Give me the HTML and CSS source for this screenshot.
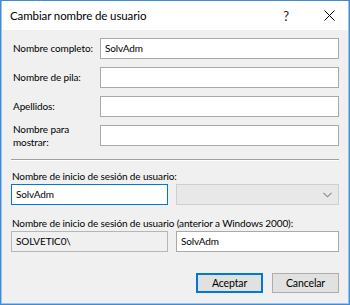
FILE: index.html
```html
<!DOCTYPE html>
<html lang="es">
<head>
<meta charset="utf-8">
<title>Cambiar nombre de usuario</title>
<link rel="stylesheet" href="styles.css">
</head>
<body>
<div class="window">
  <div class="titlebar">
    <span class="title">Cambiar nombre de usuario</span>
    <span class="tb-btn help">?</span>
    <span class="tb-btn close">
      <svg width="11" height="11" viewBox="0 0 11 11"><path d="M0.5 0.5 L10.5 10.5 M10.5 0.5 L0.5 10.5" stroke="#000" stroke-width="1" fill="none"/></svg>
    </span>
  </div>
  <div class="content">
    <div class="form-grid">
      <label class="lbl">Nombre completo:</label>
      <div class="box">SolvAdm</div>
      <label class="lbl">Nombre de pila:</label>
      <div class="box"></div>
      <label class="lbl">Apellidos:</label>
      <div class="box"></div>
      <label class="lbl lbl-two">Nombre para<br>mostrar:</label>
      <div class="box"></div>
    </div>
    <div class="sep"></div>
    <div class="caption">Nombre de inicio de sesión de usuario:</div>
    <div class="pair">
      <div class="box focus">SolvAdm</div>
      <div class="box combo disabled">
        <svg class="chev" width="9" height="6" viewBox="0 0 9 6"><path d="M0.5 0.8 L4.5 4.8 L8.5 0.8" stroke="#888" stroke-width="1.1" fill="none"/></svg>
      </div>
    </div>
    <div class="caption caption2">Nombre de inicio de sesión de usuario (anterior a Windows 2000):</div>
    <div class="pair">
      <div class="box readonly">SOLVETIC0\</div>
      <div class="box">SolvAdm</div>
    </div>
    <div class="buttons">
      <button class="btn default">Aceptar</button>
      <button class="btn">Cancelar</button>
    </div>
  </div>
</div>
</body>
</html>
```

FILE: styles.css
```css
* { box-sizing: border-box; }
html, body { margin: 0; padding: 0; }
body {
  width: 350px;
  height: 305px;
  font-family: Lato, "Liberation Sans", sans-serif;
  font-size: 10px;
  letter-spacing: -0.12px;
  color: #000;
  background: #fff;
}
.window {
  width: 350px;
  height: 305px;
  border: 1px solid #3f8bd6;
  box-shadow: inset 0 0 0 1px #9fc2e8;
  display: flex;
  flex-direction: column;
  background: #f0f0f0;
}
.titlebar {
  height: 29px;
  background: #fff;
  display: flex;
  align-items: center;
  padding-left: 8px;
  margin: 0 1px;
  flex: none;
}
.title {
  font-size: 11.5px;
  letter-spacing: -0.1px;
  flex: 1;
}
.tb-btn {
  display: flex;
  align-items: center;
  justify-content: center;
  width: 40px;
  height: 29px;
  font-size: 13px;
  color: #222;
}
.help { margin-right: 4px; }
.close { width: 38px; }
.content {
  flex: 1;
  padding: 8px 10px 0 10px;
  display: flex;
  flex-direction: column;
}
.form-grid {
  display: grid;
  grid-template-columns: 89px 1fr;
  grid-auto-rows: 21px;
  row-gap: 8px;
  align-items: center;
}
.lbl {
  padding-left: 2px;
  line-height: 13px;
  white-space: nowrap;
}
.box {
  height: 21px;
  background: #fff;
  border: 1px solid #a9a9a9;
  padding: 0 4px;
  line-height: 19px;
  white-space: nowrap;
}
.sep {
  margin-top: 13px;
  height: 2px;
  border-top: 1px solid #a0a0a0;
  border-bottom: 1px solid #fff;
  flex: none;
}
.caption {
  margin-top: 8px;
  line-height: 14px;
  height: 14px;
  white-space: nowrap;
  padding-left: 1px;
}
.caption2 { margin-top: 11px; }
.pair {
  margin-top: 1px;
  display: grid;
  grid-template-columns: 157px 1fr;
  column-gap: 8px;
}
.focus { border-color: #0078d7; }
.disabled {
  background: #e8e8e8;
  border-color: #cfcfcf;
}
.readonly {
  background: #f0f0f0;
  border-color: #b6b6b6;
}
.combo {
  display: flex;
  align-items: center;
  justify-content: flex-end;
  padding-right: 6px;
}
.buttons {
  margin-top: 21px;
  display: flex;
  justify-content: flex-end;
  gap: 9px;
}
.btn {
  width: 67px;
  height: 20px;
  background: #e1e1e1;
  border: 1px solid #adadad;
  font-family: inherit;
  font-size: 10.5px;
  letter-spacing: -0.12px;
  color: #000;
  padding: 0;
}
.default {
  border: 2px solid #0078d7;
}
```
